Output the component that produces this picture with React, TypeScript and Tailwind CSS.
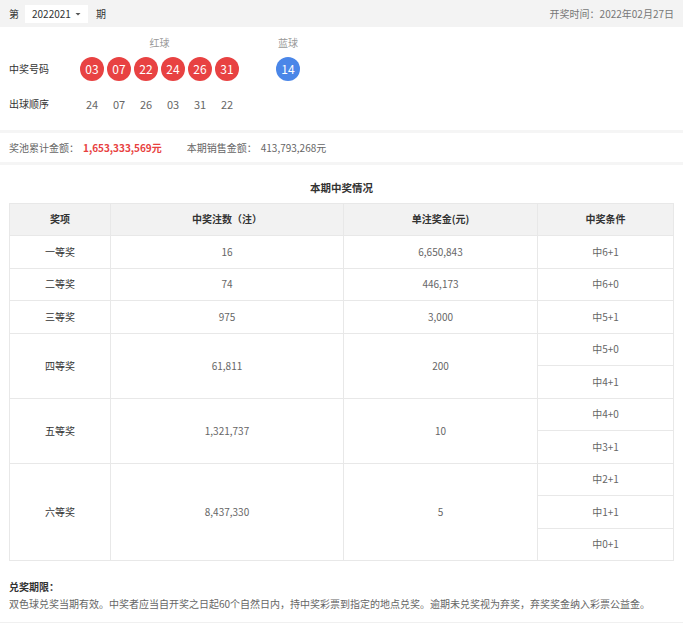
import React from "react";

const red = ["03", "07", "22", "24", "26", "31"];
const order = ["24", "07", "26", "03", "31", "22"];

type Row = { name: string; count: string; prize: string; conds: string[] };

const rows: Row[] = [
  { name: "一等奖", count: "16", prize: "6,650,843", conds: ["中6+1"] },
  { name: "二等奖", count: "74", prize: "446,173", conds: ["中6+0"] },
  { name: "三等奖", count: "975", prize: "3,000", conds: ["中5+1"] },
  { name: "四等奖", count: "61,811", prize: "200", conds: ["中5+0", "中4+1"] },
  { name: "五等奖", count: "1,321,737", prize: "10", conds: ["中4+0", "中3+1"] },
  { name: "六等奖", count: "8,437,330", prize: "5", conds: ["中2+1", "中1+1", "中0+1"] },
];

const cell = "border border-[#e8e8e8] text-center align-middle h-[32.5px] p-0";

const App = () => {
  return (
    <div className="w-[683px] min-h-[623px] bg-white text-[10px] text-[#666] font-['Noto_Sans_CJK_SC',sans-serif] leading-none">
      {/* top bar */}
      <div className="h-[27px] bg-[#f3f3f3] flex items-center justify-between px-[9px]">
        <div className="flex items-center text-[#333]">
          <span>第</span>
          <div className="ml-[6px] w-[63px] h-[18px] bg-white flex items-center justify-between pl-[7px] pr-[7px] text-[#333]">
            <span className="text-[10px]">2022021</span>
            <svg width="6" height="4" viewBox="0 0 6 4">
              <path d="M0.5 1h5L3 3.5z" fill="#555" />
            </svg>
          </div>
          <span className="ml-[8px]">期</span>
        </div>
        <span className="text-[#777]">开奖时间：2022年02月27日</span>
      </div>

      {/* balls */}
      <div className="h-[103px] pl-[9px] pt-[9px]">
        <div className="flex">
          <div className="w-[71px] flex flex-col">
            <div className="h-[14px]" />
            <div className="h-[24px] mt-[7px] flex items-center text-[#333]">中奖号码</div>
            <div className="h-[24px] mt-[11px] flex items-center text-[#333]">出球顺序</div>
          </div>
          <div className="flex flex-col">
            <div className="h-[14px] flex items-center justify-center text-[#999]">红球</div>
            <div className="mt-[7px] flex gap-[3px]">
              {red.map((n) => (
                <div
                  key={n}
                  className="w-[24px] h-[24px] rounded-full bg-[#e84242] text-white text-[12px] flex items-center justify-center"
                >
                  {n}
                </div>
              ))}
            </div>
            <div className="mt-[11px] flex gap-[3px]">
              {order.map((n) => (
                <div key={n} className="w-[24px] h-[24px] flex items-center justify-center text-[11px] text-[#666]">
                  {n}
                </div>
              ))}
            </div>
          </div>
          <div className="ml-[37px] flex flex-col items-center">
            <div className="h-[14px] flex items-center text-[#999]">蓝球</div>
            <div className="mt-[7px] w-[24px] h-[24px] rounded-full bg-[#4a86e8] text-white text-[12px] flex items-center justify-center">
              14
            </div>
          </div>
        </div>
      </div>

      {/* pool */}
      <div className="border-y-[3px] border-[#f5f5f5] h-[35px] flex items-center px-[9px]">
        <span>奖池累计金额：</span>
        <span className="ml-[4px] text-[#e8413f] font-bold">1,653,333,569元</span>
        <span className="ml-[25px]">本期销售金额：</span>
        <span className="ml-[4px]">413,793,268元</span>
      </div>

      {/* table */}
      <div className="pt-[18px] text-center font-bold text-[#333] text-[10.5px]">本期中奖情况</div>
      <div className="px-[9px] mt-[9px]">
        <table className="w-full border-collapse table-fixed">
          <colgroup>
            <col className="w-[101px]" />
            <col className="w-[233px]" />
            <col className="w-[194px]" />
            <col />
          </colgroup>
          <thead>
            <tr className="bg-[#f2f2f2] text-[#333] font-bold">
              <th className={cell}>奖项</th>
              <th className={cell}>中奖注数（注）</th>
              <th className={cell}>单注奖金(元)</th>
              <th className={cell}>中奖条件</th>
            </tr>
          </thead>
          <tbody>
            {rows.map((r) =>
              r.conds.map((c, i) => (
                <tr key={r.name + c}>
                  {i === 0 && (
                    <>
                      <td rowSpan={r.conds.length} className={cell + " text-[#333]"}>
                        {r.name}
                      </td>
                      <td rowSpan={r.conds.length} className={cell}>
                        {r.count}
                      </td>
                      <td rowSpan={r.conds.length} className={cell}>
                        {r.prize}
                      </td>
                    </>
                  )}
                  <td className={cell}>{c}</td>
                </tr>
              ))
            )}
          </tbody>
        </table>
      </div>

      {/* notes */}
      <div className="px-[9px] pt-[21px] pb-[13px] border-b-[3px] border-[#f0f0f0]">
        <div className="font-bold text-[#333]">兑奖期限：</div>
        <div className="mt-[7px]">
          双色球兑奖当期有效。中奖者应当自开奖之日起60个自然日内，持中奖彩票到指定的地点兑奖。逾期未兑奖视为弃奖，弃奖奖金纳入彩票公益金。
        </div>
      </div>
    </div>
  );
};

export default App;
